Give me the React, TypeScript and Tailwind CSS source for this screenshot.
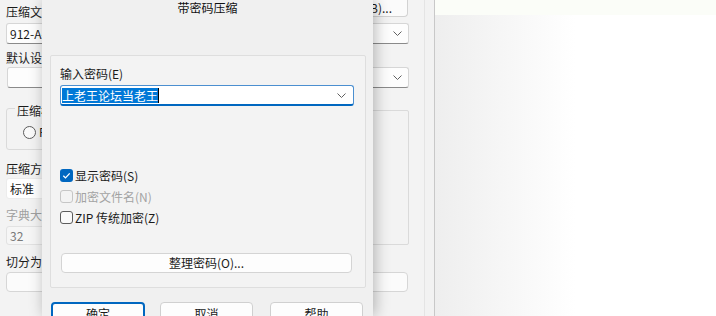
import React from "react";

const Chevron = () => (
  <svg width="9" height="5" viewBox="0 0 9 5" className="shrink-0">
    <path d="M0.5 0.5L4.5 4.5L8.5 0.5" fill="none" stroke="#606060" strokeWidth="1" />
  </svg>
);

type CheckProps = { label: string; checked?: boolean; disabled?: boolean };

const CheckRow: React.FC<CheckProps> = ({ label, checked, disabled }) => (
  <div className="h-[21px] flex items-center gap-[2px]">
    {checked ? (
      <span className="w-[13px] h-[13px] rounded-[3px] bg-[#0067c0] flex items-center justify-center">
        <svg width="13" height="13" viewBox="0 0 13 13">
          <path d="M3.3 6.7L5.5 8.9L9.7 4.4" fill="none" stroke="#fff" strokeWidth="1.3" />
        </svg>
      </span>
    ) : (
      <span
        className={
          disabled
            ? "w-[13px] h-[13px] rounded-[3px] border border-[#c6c6c6] bg-[#f3f3f3]"
            : "w-[13px] h-[13px] rounded-[3px] border border-[#5c5c5c] bg-[#f9f9f9]"
        }
      />
    )}
    <span className={disabled ? "text-[#a3a3a3]" : "text-[#1b1b1b]"}>{label}</span>
  </div>
);

export default function App() {
  return (
    <div className="relative w-[716px] h-[316px] overflow-hidden bg-white flex font-['Noto_Sans_CJK_SC',sans-serif] text-[12px] leading-[18px] text-[#1b1b1b]">
      {/* background window */}
      <div className="w-[425px] h-full shrink-0 bg-[#f3f3f3] border-r border-[#e4e4e4] pl-[6px]">
        <div className="w-[403px] flex flex-col">
          <div className="h-[23px] flex justify-between items-start">
            <span className="pt-[3px]">压缩文件名(A)</span>
            <div className="h-[17px] w-[82px] mr-[1px] border border-t-0 border-[#d2d2d2] rounded-b-[4px] bg-[#fbfbfb] flex items-center justify-center">
              浏览(B)...
            </div>
          </div>
          <div className="h-[21px] border border-[#d6d6d6] border-b-[#8a8a8a] rounded-[3px] bg-[#fdfdfd] flex items-center justify-between pl-[3px] pr-[6px]">
            <span>912-A-论坛资源.zip</span>
            <Chevron />
          </div>
          <span className="mt-[5px] h-[18px]">默认设置</span>
          <div className="h-[21px] ml-[1px] border border-[#d6d6d6] border-b-[#8a8a8a] rounded-[3px] bg-[#fdfdfd] flex items-center justify-end pr-[6px]">
            <Chevron />
          </div>

          <div className="flex mt-[20px] gap-[12px]">
            <div className="w-[190px] flex flex-col">
              <div className="relative h-[42px] border border-[#dadada] rounded-[3px]">
                <span className="absolute left-[8px] -top-[5px] px-[2px] bg-[#f3f3f3] leading-[14px]">压缩格式</span>
                <div className="flex items-center gap-[3px] pl-[16px] pt-[14px]">
                  <span className="w-[13px] h-[13px] rounded-full border border-[#5c5c5c] bg-[#fafafa]" />
                  <span>RAR</span>
                </div>
              </div>
              <span className="mt-[10px] h-[18px]">压缩方式(C)</span>
              <div className="h-[21px] border border-[#ececec] rounded-[3px] bg-white flex items-center pl-[3px]">
                标准
              </div>
              <span className="mt-[7px] h-[18px] text-[#a0a0a0]">字典大小(I)</span>
              <div className="mt-[2px] h-[19px] border border-[#e2e2e2] rounded-[3px] bg-[#f6f6f6] flex items-center pl-[3px] text-[#7a7a7a]">
                32
              </div>
            </div>
            <div className="flex-1 mt-[2px] h-[135px] border border-[#dadada] rounded-[2px]" />
          </div>

          <span className="mt-[8px] h-[18px]">切分为分卷(V)，大小</span>
          <div className="mt-[1px] h-[20px] mr-[1px] border border-[#d6d6d6] rounded-[4px] bg-[#fbfbfb]" />
        </div>
      </div>
      <div className="w-[10px] h-full shrink-0 bg-[#f2f2f2] border-r border-[#c8c8c8]" />
      <div className="flex-1 h-full flex flex-col">
        <div className="h-[15px] bg-[#fbfdf8]" />
        <div className="flex-1 bg-gradient-to-r from-[#eeeeee] via-white to-white" />
      </div>

      {/* dialog */}
      <div className="absolute left-[42px] top-0 w-[331px] h-full bg-[#f0f0f0] shadow-[2px_0_14px_rgba(0,0,0,0.28)] flex flex-col">
        <div className="shrink-0 h-[16px] leading-[16px] text-center text-[#111]">带密码压缩</div>
        <div className="shrink-0 mt-[39px] ml-[8px] w-[316px] h-[233px] border border-[#dedede] rounded-[2px] bg-[#f3f3f3] pl-[9px] flex flex-col">
          <span className="shrink-0 mt-[9px] h-[18px]">输入密码(E)</span>
          <div className="shrink-0 mt-[2px] w-[294px] h-[21px] border border-[#4b8fd0] border-b-2 border-b-[#0067c0] rounded-[3px] bg-white flex items-center justify-between pl-[1px] pr-[7px]">
            <div className="flex items-center">
              <span className="bg-[#0078d7] text-white leading-[15px]">上老王论坛当老王</span>
              <span className="w-[1px] h-[15px] bg-black" />
            </div>
            <Chevron />
          </div>
          <div className="shrink-0 mt-[59px] flex flex-col">
            <CheckRow label="显示密码(S)" checked />
            <CheckRow label="加密文件名(N)" disabled />
            <CheckRow label="ZIP 传统加密(Z)" />
          </div>
          <div className="shrink-0 mt-[25px] ml-[1px] w-[291px] h-[20px] border border-[#d4d4d4] rounded-[4px] bg-[#fdfdfd] flex items-center justify-center">
            整理密码(O)...
          </div>
        </div>
        <div className="shrink-0 mt-[14px] ml-[9px] flex">
          <div className="w-[94px] h-[24px] border-2 border-[#0067c0] rounded-[4px] bg-[#fdfdfd] flex items-center justify-center">
            确定
          </div>
          <div className="ml-[15px] w-[93px] h-[24px] border border-[#d0d0d0] rounded-[4px] bg-[#fdfdfd] flex items-center justify-center">
            取消
          </div>
          <div className="ml-[17px] w-[93px] h-[24px] border border-[#d0d0d0] rounded-[4px] bg-[#fdfdfd] flex items-center justify-center">
            帮助
          </div>
        </div>
      </div>
    </div>
  );
}
